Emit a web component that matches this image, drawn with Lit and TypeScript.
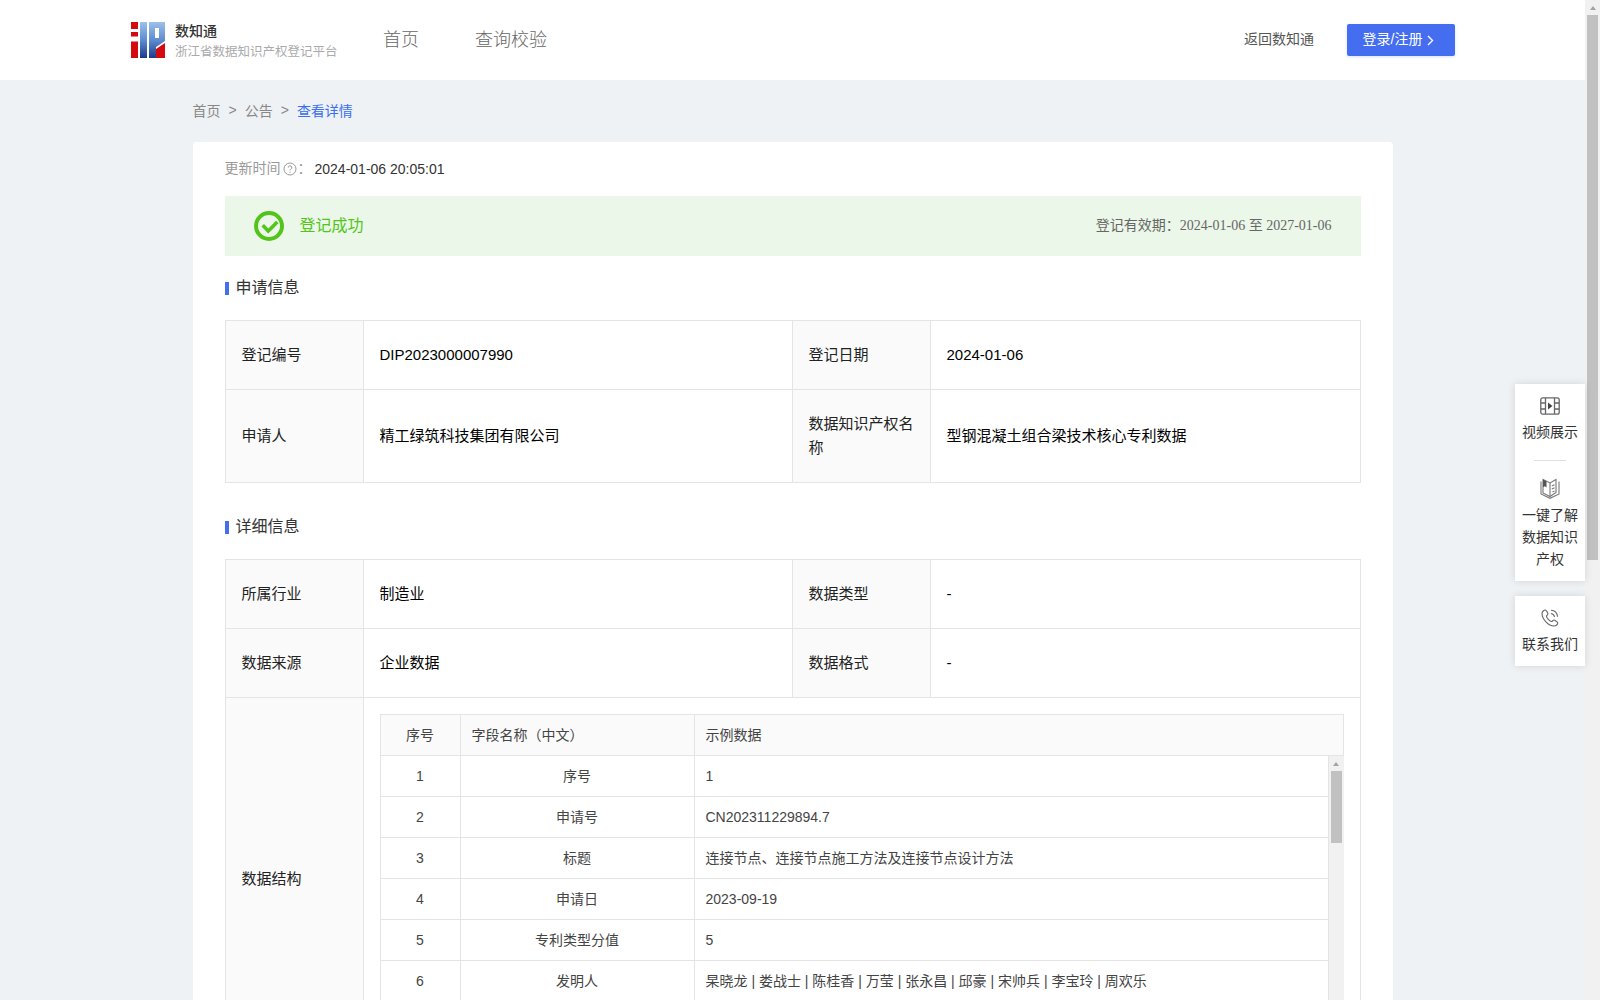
import { LitElement, css, html } from 'lit';
import { customElement } from 'lit/decorators.js';

const fields: [string, string][] = [
  ['序号', '1'],
  ['申请号', 'CN202311229894.7'],
  ['标题', '连接节点、连接节点施工方法及连接节点设计方法'],
  ['申请日', '2023-09-19'],
  ['专利类型分值', '5'],
  ['发明人', '杲晓龙 | 娄战士 | 陈桂香 | 万莹 | 张永昌 | 邱豪 | 宋帅兵 | 李宝玲 | 周欢乐'],
];

@customElement('app-root')
export class AppRoot extends LitElement {
  static styles = css`
    :host {
      display: block;
      font-family: "Liberation Sans", "Noto Sans CJK SC", sans-serif;
      font-size: 14px;
      color: #333;
    }

    .page {
      height: 100vh;
      display: flex;
      overflow: hidden;
      background: #eff2f5;
    }

    .content {
      flex: 1;
      min-width: 0;
      overflow: hidden;
    }

    .bar {
      flex: none;
      width: 15px;
      background: #f1f1f1;
      display: flex;
      flex-direction: column;
    }

    .bar .arrow {
      flex: none;
      height: 15px;
      display: flex;
      align-items: center;
      justify-content: center;
    }

    .bar .arrow::before {
      content: '';
      border: 3.5px solid transparent;
      border-top: 0;
      border-bottom: 4px solid #a3a3a3;
    }

    .bar .thumb {
      flex: none;
      margin: 0 2px;
      background: #c1c1c1;
    }

    .bar .thumb.page-thumb {
      height: 545px;
    }

    .bar .thumb.body-thumb {
      height: 72px;
    }

    header {
      height: 80px;
      background: #fff;
      display: flex;
      align-items: center;
      padding: 0 130px 0 131px;
    }

    .logo {
      display: flex;
      align-items: center;
      gap: 10px;
      width: 252px;
    }

    .logo svg {
      display: block;
    }

    .logo .names {
      padding-top: 2px;
    }

    .brand {
      font-size: 14px;
      line-height: 20px;
      font-weight: 500;
      color: #333;
    }

    .slogan {
      font-size: 12.5px;
      line-height: 20px;
      margin-top: 1px;
      color: #aaa;
      white-space: nowrap;
    }

    nav {
      display: flex;
      gap: 56px;
      font-size: 18px;
      font-weight: 300;
      color: #666;
      flex: 1;
      padding-bottom: 4px;
    }

    .back {
      color: #555;
      margin-right: 33px;
      padding-bottom: 4px;
    }

    .login {
      width: 108px;
      height: 32px;
      background: #446eef;
      border-radius: 2px;
      box-shadow: 0 1px 3px rgba(68, 110, 239, 0.2);
      color: #fff;
      display: flex;
      align-items: center;
      justify-content: center;
      gap: 5px;
      padding: 0 5px 4px 0;
      box-sizing: border-box;
    }

    .login svg {
      margin-top: 4px;
    }

    main {
      width: 1200px;
      margin: 0 auto;
    }

    .crumbs {
      height: 62px;
      display: flex;
      align-items: center;
      gap: 8px;
      color: #888;
      padding-bottom: 3px;
      box-sizing: border-box;
    }

    .crumbs .current {
      color: #3a6ff0;
    }

    .card {
      box-sizing: border-box;
      background: #fff;
      border-radius: 4px;
      padding: 17px 32px 32px;
    }

    .updated {
      display: flex;
      align-items: center;
      height: 20px;
      color: #999;
      margin-bottom: 17px;
    }

    .updated .name {
      padding-bottom: 4px;
    }

    .updated svg {
      margin: 0 1px 0 2px;
    }

    .updated .time {
      color: #333;
      margin-left: 3px;
    }

    .alert {
      height: 60px;
      background: #ebf7e8;
      display: flex;
      align-items: center;
      padding: 0 29px;
      color: #666;
    }

    .alert svg {
      margin-right: 16px;
    }

    .alert .ok {
      font-size: 16px;
      color: #52c41a;
      flex: 1;
      padding-bottom: 5px;
    }

    .alert .validity {
      padding-bottom: 5px;
    }

    .alert .dates {
      font-family: "Liberation Serif", "Noto Sans CJK SC", serif;
    }

    h2 {
      display: flex;
      align-items: center;
      box-sizing: border-box;
      height: 24px;
      margin: 20px 0;
      padding-bottom: 5px;
      font-size: 16px;
      font-weight: 400;
      color: #333;
    }

    h2::before {
      content: '';
      width: 4px;
      height: 13px;
      background: #446eef;
      margin: 6px 7px 0 0;
    }

    .table-title-next {
      margin-top: 32px;
    }

    table {
      width: 1135px;
      table-layout: fixed;
      border-collapse: collapse;
      font-size: 15px;
      line-height: 24px;
      color: #000;
    }

    td {
      border: 1px solid #e4e4e4;
      padding: 22px 16px;
      vertical-align: middle;
    }

    td.label {
      background: #fafafa;
      color: #222;
    }

    td.nested {
      padding: 16px;
    }

    .sample {
      font-size: 14px;
      line-height: 20px;
      color: #444;
    }

    .sample .row {
      display: grid;
      grid-template-columns: 80px 234px 1fr;
      height: 41px;
      box-sizing: border-box;
      border-bottom: 1px solid #e4e4e4;
    }

    .sample .cell {
      display: flex;
      align-items: center;
      padding: 0 11px;
      border-right: 1px solid #e4e4e4;
    }

    .sample .center {
      justify-content: center;
    }

    .sample .head {
      height: 42px;
      background: #fafafa;
      border: 1px solid #e4e4e4;
      color: #444;
    }

    .sample .head .cell:last-child {
      border-right: 0;
    }

    .sample .body {
      height: 287px;
      display: flex;
      border-left: 1px solid #e4e4e4;
      border-bottom: 1px solid #e4e4e4;
    }

    .sample .rows {
      flex: 1;
      min-width: 0;
    }

    .side {
      position: absolute;
      top: 384px;
      right: 15px;
      width: 70px;
      display: flex;
      flex-direction: column;
      gap: 15px;
      line-height: 22px;
      color: #333;
      text-align: center;
    }

    .side .box {
      background: #fff;
      box-shadow: 0 0 8px rgba(0, 0, 0, 0.12);
      padding: 13px 0 11px;
    }

    .side svg {
      display: block;
      margin: 0 auto 6px;
    }

    .side svg.book {
      margin-bottom: 5px;
    }

    .side hr {
      width: 32px;
      height: 1px;
      border: 0;
      background: #e0e0e0;
      margin: 17px auto;
    }
  `;

  renderLogo() {
    return html`<svg width="34" height="36" viewBox="0 0 34 36">
      <defs>
        <linearGradient id="blue" x1="0" y1="0" x2="0" y2="1">
          <stop offset="0" stop-color="#9cc0ea"></stop>
          <stop offset="0.5" stop-color="#5f8ccf"></stop>
          <stop offset="1" stop-color="#1c3a8c"></stop>
        </linearGradient>
      </defs>
      <path fill="#d40a0f" d="M0 0h7v7H0zM0 10h7v4.500H0zM0 19.500h7V36H0z"></path>
      <path fill="url(#blue)" d="M9 0h7v36H9zM18 0h16v19l-9 6v11h-7zM24 6v10h4V6z" fill-rule="evenodd"></path>
      <path fill="#d40a0f" d="M25 36V27l9-6v15z"></path>
    </svg>`;
  }

  renderSample() {
    return html`<div class="sample">
      <div class="row head">
        <div class="cell center">序号</div>
        <div class="cell">字段名称（中文）</div>
        <div class="cell">示例数据</div>
      </div>
      <div class="body">
        <div class="rows">
          ${fields.map(([name, value], i) => html`<div class="row">
            <div class="cell center">${i + 1}</div>
            <div class="cell center">${name}</div>
            <div class="cell">${value}</div>
          </div>`)}
        </div>
        <div class="bar">
          <div class="arrow"></div>
          <div class="thumb body-thumb"></div>
        </div>
      </div>
    </div>`;
  }

  render() {
    return html`
      <div class="page">
        <div class="content">
          <header>
            <div class="logo">
              ${this.renderLogo()}
              <div class="names">
                <div class="brand">数知通</div>
                <div class="slogan">浙江省数据知识产权登记平台</div>
              </div>
            </div>
            <nav><span>首页</span><span>查询校验</span></nav>
            <span class="back">返回数知通</span>
            <div class="login">
              登录/注册
              <svg width="7" height="11" viewBox="0 0 7 11" fill="none" stroke="#fff" stroke-width="1.4"><path d="M1 1l4.500 4.500L1 10"></path></svg>
            </div>
          </header>

          <main>
            <div class="crumbs">
              <span>首页</span><span>&gt;</span><span>公告</span><span>&gt;</span><span class="current">查看详情</span>
            </div>

            <div class="card">
              <div class="updated">
                <span class="name">更新时间</span>
                <svg width="14" height="14" viewBox="0 0 14 14" fill="none" stroke="#999">
                  <circle cx="7" cy="7" r="6"></circle>
                  <path d="M5.200 5.600a1.800 1.800 0 1 1 2.600 1.600c-.5.3-.8.6-.8 1.200M7 9.600v1.200"></path>
                </svg>
                <span class="name">：</span><span class="time">2024-01-06 20:05:01</span>
              </div>

              <div class="alert">
                <svg width="30" height="30" viewBox="0 0 30 30" fill="none" stroke="#52c41a">
                  <circle cx="15" cy="15" r="13" stroke-width="4"></circle>
                  <path d="M8.700 14.300l5.600 5.700 9-9.100" stroke-width="3.500"></path>
                </svg>
                <span class="ok">登记成功</span>
                <span class="validity">登记有效期：<span class="dates">2024-01-06 至 2027-01-06</span></span>
              </div>

              <h2>申请信息</h2>
              <table>
                <colgroup><col style="width:138px" /><col style="width:429px" /><col style="width:138px" /><col style="width:430px" /></colgroup>
                <tr>
                  <td class="label">登记编号</td><td>DIP2023000007990</td>
                  <td class="label">登记日期</td><td>2024-01-06</td>
                </tr>
                <tr>
                  <td class="label">申请人</td><td>精工绿筑科技集团有限公司</td>
                  <td class="label">数据知识产权名称</td><td>型钢混凝土组合梁技术核心专利数据</td>
                </tr>
              </table>

              <h2 class="table-title-next">详细信息</h2>
              <table>
                <colgroup><col style="width:138px" /><col style="width:429px" /><col style="width:138px" /><col style="width:430px" /></colgroup>
                <tr>
                  <td class="label">所属行业</td><td>制造业</td>
                  <td class="label">数据类型</td><td>-</td>
                </tr>
                <tr>
                  <td class="label">数据来源</td><td>企业数据</td>
                  <td class="label">数据格式</td><td>-</td>
                </tr>
                <tr>
                  <td class="label">数据结构</td>
                  <td class="nested" colspan="3">${this.renderSample()}</td>
                </tr>
              </table>
            </div>
          </main>

          <aside class="side">
            <div class="box">
              <svg width="20" height="18" viewBox="0 0 20 18" fill="none" stroke="#666" stroke-width="1.300">
                <rect x="0.800" y="0.800" width="18.400" height="16.400" rx="2"></rect>
                <path d="M5.500 1v16M14.500 1v16M1 6h4.500M1 12h4.500M14.500 6H19M14.500 12H19"></path>
                <path d="M8 5.500l4.500 3.500-4.500 3.500z" fill="#444" stroke="none"></path>
              </svg>
              视频展示
              <hr />
              <svg class="book" width="20" height="21" viewBox="0 0 20 21" fill="none" stroke="#777" stroke-width="1.100">
                <path d="M1 3.500v12.500l9 4.300 9-4.300V3.500"></path>
                <path d="M3 1.500l7 3.500 6-3.500v13l-6 4-7-3.500z"></path>
                <path d="M10 5v13.500M11.800 8l2.700-1.200M11.800 11l2.700-1.200M12.500 14l2-1"></path>
                <path d="M3 1.500l3.500 1.800v6.200l-1.700-1.200-1.800 1z" fill="#555" stroke="none"></path>
              </svg>
              一键了解<br />数据知识<br />产权
            </div>
            <div class="box">
              <svg width="20" height="18" viewBox="0 0 20 18" fill="none" stroke="#666" stroke-width="1.100">
                <path d="M5.500 1c-1.500 0-3.500 1.500-3.500 3.500 0 5.500 6.500 12.500 12 12.500 2 0 3.800-1.600 3.800-3.200 0-.5-3-2.800-3.800-2.800-1 0-1.500 1.500-2.500 1.500-1.800 0-5-3.700-5-5.200 0-1 1.500-1.500 1.500-2.500 0-.8-2-3.800-2.500-3.800z"></path>
                <path d="M11 4.500c2 .2 3.300 1.500 3.500 3.500M11 1.200c3.800.2 6.300 2.800 6.500 6.500"></path>
              </svg>
              联系我们
            </div>
          </aside>
        </div>

        <div class="bar">
          <div class="arrow"></div>
          <div class="thumb page-thumb"></div>
        </div>
      </div>
    `;
  }
}
